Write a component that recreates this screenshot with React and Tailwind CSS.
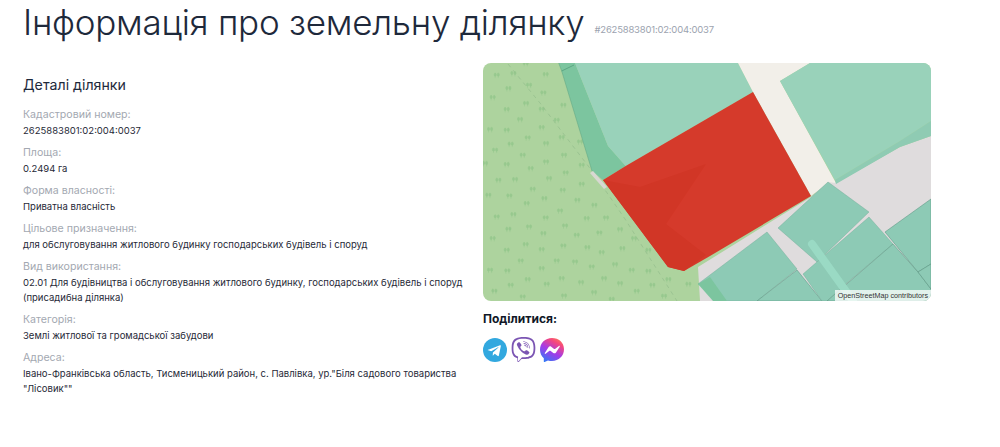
import React from "react";
import { FaViber } from "react-icons/fa";

const treesA = [[50,65],[100,60],[197,63],[147,95],[85,105],[190,118],[38,132],[138,150],[185,167],[80,168],[250,155],[120,198],[230,200],[185,222],[30,228],[80,230],[245,252],[143,253],[92,272],[198,270],[45,290],[128,305],[252,305],[198,325],[15,330],[80,333],[152,345],[257,358],[55,380],[105,378],[207,375],[305,335],[340,295],[300,265],[365,253],[332,218],[290,125],[320,157],[137,30]];
const treesB = [[25,50],[88,52],[158,32],[248,35],[305,17],[140,75],[193,60],[292,65],[343,80],[50,115],[100,108],[240,97],[197,118],[320,120],[378,118],[85,152],[147,145],[255,142],[190,165],[290,170],[358,163],[420,153],[38,180],[462,180],[137,198],[250,202],[322,207],[365,222],[427,210],[80,215],[185,213],[505,215],[122,247],[230,247],[285,250],[335,265],[405,258],[30,275],[82,277],[185,270],[455,275],[505,278],[143,303],[245,300],[372,300],[565,303],[92,320],[200,317],[303,312],[420,315],[470,338],[517,320],[625,317],[43,338],[342,342],[128,355],[252,352],[552,353],[395,362]];
const trees = [
  ...treesA.map(([x, y]) => [480 + x / 3 - 483, 55 + y / 3 - 64]),
  ...treesB.map(([x, y]) => [480 + x / 3 - 483, 180 + y / 3 - 64]),
];
const P = (pts) => pts.map(([x, y]) => `${x - 483},${y - 64}`).join(" ");

function MapArt() {
  return (
    <svg viewBox="0 0 448 238" className="block w-full h-full">
      <rect width="448" height="238" fill="#add39e" />
      {trees.map(([x, y], i) => (
        <g key={i} transform={`translate(${x} ${y})`} fill="#97c88e" stroke="#97c88e" strokeWidth="0.5">
          <ellipse cx="-1.5" cy="-1" rx="1.1" ry="1.7" />
          <ellipse cx="1.6" cy="-1" rx="1.1" ry="1.7" />
          <path d="M-1.5 0v2.4M1.6 0v2.4" fill="none" />
        </g>
      ))}
      <polyline points={P([[508,65],[540,104],[592,172],[625,220],[677,302]])} fill="none" stroke="#93bd8c" strokeWidth="0.7" strokeDasharray="4 4" />
      <polygon points={P([[558.7,64],[575,64],[608,147],[625.7,167],[603,181],[592,172],[561.7,72]])} fill="#7cc59f" />
      <path d={`M${561.7-483} ${72-64}L${574-483} ${66-64}`} stroke="#4f9a78" strokeWidth="0.7" />
      <polyline points={P([[558.7,64],[561.7,72],[592,172]])} fill="none" stroke="#5ea583" strokeWidth="0.5" />
      <polygon points={P([[575,64],[738,64],[753,93],[625.7,167],[608,147]])} fill="#99d2ba" />
      <polygon points={P([[738,64],[810,64],[780,82],[836,184],[828,184],[811,197],[753,93]])} fill="#f2efe9" />
      <polygon points={P([[828,183],[836,184],[900,148],[931,137],[931,302],[700,302],[698,268],[811,198]])} fill="#dfdcdd" />
      <polygon points={P([[780,82],[810,64],[931,64],[931,122],[900,142],[835,181]])} fill="#99d2ba" />
      <polygon points={P([[835,181],[900,142],[931,122],[931,137],[900,148],[836,185]])} fill="#8fcbb3" />
      <polygon points={P([[828,183],[869,213],[817,263],[778,229]])} fill="#8dcab5" stroke="#6aa892" strokeWidth="0.4" />
      <polygon points={P([[767,233],[797,270],[757,302],[727,302],[698,285]])} fill="#8dcab5" stroke="#6aa892" strokeWidth="0.4" />
      <polygon points={P([[698,285],[710,278],[727,302],[713,302]])} fill="#7cc59f" />
      <polygon points={P([[797,271],[822,302],[757,302]])} fill="#8dcab5" stroke="#55917c" strokeWidth="0.5" />
      <polygon points={P([[803,275],[869,218],[893,245],[848,283],[827,302],[822,302]])} fill="#8dcab5" stroke="#6aa892" strokeWidth="0.4" />
      <polygon points={P([[893,245],[918,273],[931,290],[931,302],[827,302]])} fill="#8dcab5" stroke="#55917c" strokeWidth="0.5" />
      <polygon points={P([[885,233],[931,200],[931,265],[918,273]])} fill="#8dcab5" stroke="#55917c" strokeWidth="0.5" />
      <polygon points={P([[918,273],[931,265],[931,290]])} fill="#8dcab5" stroke="#55917c" strokeWidth="0.5" />
      <path d={`M${812-483} ${245-64}L${853-483} ${302-64}`} stroke="#9adac4" strokeWidth="8" strokeLinecap="round" fill="none" />
      <polygon points={P([[753,93],[811,197],[710,257],[684,272],[668,268],[603,181],[625.7,167]])} fill="#d53a2b" />
      <polygon points={P([[603,181],[640,188],[706,165],[666,225],[706,256],[684,272],[668,268]])} fill="#d13626" />
      <polygon points={P([[590,174],[593,172],[607,188],[604,190]])} fill="#d8d8d2" />
    </svg>
  );
}

function Row({ label, children }) {
  return (
    <div className="mb-[7px]">
      <div className="text-[10.6px] leading-4 text-[#a3a8b1]">{label}</div>
      <div className="text-[9.5px] leading-[15px] text-[#1f2937]">{children}</div>
    </div>
  );
}

export default function App() {
  return (
    <div className="w-[1000px] h-[447px] overflow-hidden bg-white pl-[23px] text-[#1e293b] font-['Inter','Noto_Sans',sans-serif]">
      <div className="flex items-center h-[44px] gap-[10px]">
        <h1 className="text-[35px] leading-[44px] font-[350] tracking-[-0.25px] whitespace-nowrap">Інформація про земельну ділянку</h1>
        <span className="text-[9.5px] text-[#9ca3af] tracking-[-0.2px] mt-[16px]">#2625883801:02:004:0037</span>
      </div>
      <div className="flex mt-[19px]">
        <div className="w-[460px] pt-[12px]">
          <h2 className="text-[14.2px] leading-5 mb-[12px]">Деталі ділянки</h2>
          <Row label="Кадастровий номер:">2625883801:02:004:0037</Row>
          <Row label="Площа:">0.2494 га</Row>
          <Row label="Форма власності:">Приватна власність</Row>
          <Row label="Цільове призначення:">для обслуговування житлового будинку господарських будівель і споруд</Row>
          <Row label="Вид використання:">02.01 Для будівництва і обслуговування житлового будинку, господарських будівель і споруд (присадибна ділянка)</Row>
          <Row label="Категорія:">Землі житлової та громадської забудови</Row>
          <Row label="Адреса:">Івано-Франківська область, Тисменицький район, с. Павлівка, ур."Біля садового товариства "Лісовик""</Row>
        </div>
        <div className="w-[448px]">
          <div className="relative h-[238px] rounded-lg overflow-hidden">
            <MapArt />
            <div className="absolute right-0 bottom-0 h-[11px] px-[3px] bg-white/75 text-[7.2px] leading-[11px] text-[#333] font-['Liberation_Sans',sans-serif]">OpenStreetMap contributors</div>
          </div>
          <div className="mt-[10px] text-[12px] leading-[16px] font-bold text-[#111827]">Поділитися:</div>
          <div className="flex items-center gap-[4px] mt-[10px]">
            <svg width="24" height="24" viewBox="0 0 240 240">
              <circle cx="120" cy="120" r="120" fill="#32a8df" />
              <path fill="#fff" d="M53.9 117.6l116-44.7c5.4-1.9 10.1 1.3 8.3 9.5l-19.7 93c-1.5 6.6-5.4 8.2-10.9 5.1l-30-22.1-14.5 14c-1.6 1.6-3 3-6 3l2.2-30.5 55.6-50.2c2.4-2.1-.5-3.3-3.8-1.2L82.4 132.8l-29.6-9.2c-6.4-2-6.5-6.4 1.1-9.5z" />
            </svg>
            <FaViber size={25} color="#7b55b3" />
            <svg width="24" height="24" viewBox="0 0 24 24">
              <defs>
                <linearGradient id="mg" x1="0.2" y1="1" x2="0.8" y2="0">
                  <stop offset="0" stopColor="#2f7bf6" />
                  <stop offset="0.45" stopColor="#a33be8" />
                  <stop offset="0.8" stopColor="#f5477e" />
                  <stop offset="1" stopColor="#fb7a5a" />
                </linearGradient>
              </defs>
              <path fill="url(#mg)" d="M12 0C5.2 0 0 5 0 11.7c0 3.5 1.4 6.5 3.8 8.6v3.1c0 .4.4.7.8.5l3.4-1.5c1.3.4 2.6.5 4 .5 6.8 0 12-5 12-11.7S18.8 0 12 0z" />
              <path fill="#fff" d="M4.8 15l3.7-5.8c.6-.9 1.8-1.1 2.7-.5l2.9 2.2c.3.2.6.2.9 0l3.9-3c.5-.4 1.2.2.8.8l-3.7 5.8c-.6.9-1.8 1.1-2.7.5l-2.9-2.2c-.3-.2-.6-.2-.9 0l-3.9 3c-.5.4-1.2-.2-.8-.8z" />
            </svg>
          </div>
        </div>
      </div>
    </div>
  );
}
